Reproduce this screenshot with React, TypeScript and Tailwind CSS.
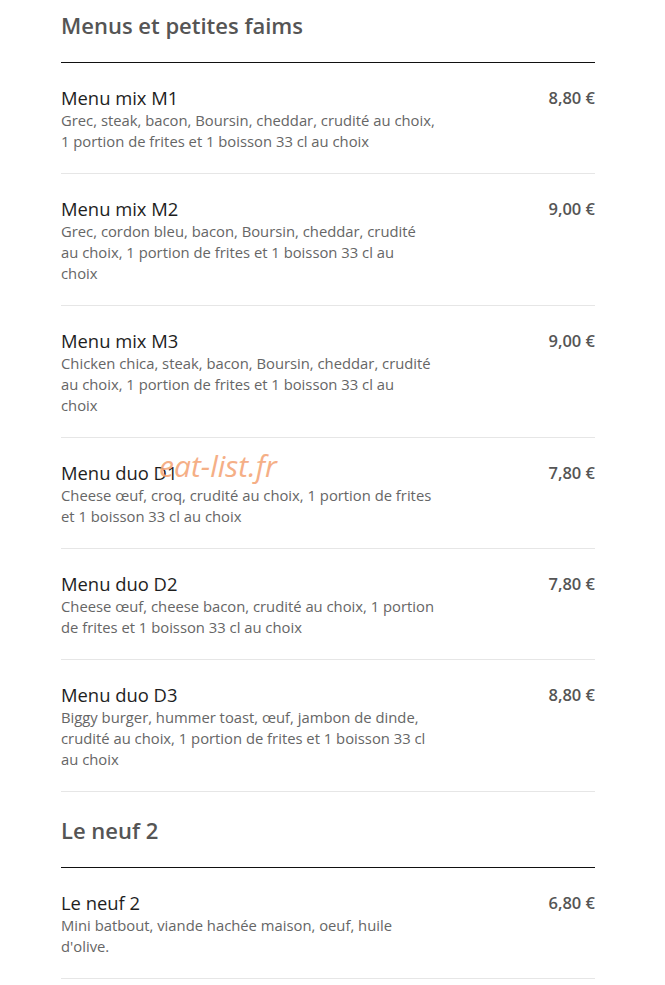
const sections = [
  {
    title: "Menus et petites faims",
    items: [
      {
        name: "Menu mix M1",
        desc: "Grec, steak, bacon, Boursin, cheddar, crudité au choix,\n1 portion de frites et 1 boisson 33 cl au choix",
        price: "8,80 €",
      },
      {
        name: "Menu mix M2",
        desc: "Grec, cordon bleu, bacon, Boursin, cheddar, crudité\nau choix, 1 portion de frites et 1 boisson 33 cl au\nchoix",
        price: "9,00 €",
      },
      {
        name: "Menu mix M3",
        desc: "Chicken chica, steak, bacon, Boursin, cheddar, crudité\nau choix, 1 portion de frites et 1 boisson 33 cl au\nchoix",
        price: "9,00 €",
      },
      {
        name: "Menu duo D1",
        desc: "Cheese œuf, croq, crudité au choix, 1 portion de frites\net 1 boisson 33 cl au choix",
        price: "7,80 €",
      },
      {
        name: "Menu duo D2",
        desc: "Cheese œuf, cheese bacon, crudité au choix, 1 portion\nde frites et 1 boisson 33 cl au choix",
        price: "7,80 €",
      },
      {
        name: "Menu duo D3",
        desc: "Biggy burger, hummer toast, œuf, jambon de dinde,\ncrudité au choix, 1 portion de frites et 1 boisson 33 cl\nau choix",
        price: "8,80 €",
      },
    ],
  },
  {
    title: "Le neuf 2",
    items: [
      {
        name: "Le neuf 2",
        desc: "Mini batbout, viande hachée maison, oeuf, huile\nd'olive.",
        price: "6,80 €",
      },
    ],
  },
];

export default function App() {
  return (
    <div
      className="relative min-h-[985px] bg-white pl-[61px] pr-[70px] pt-[11px] pb-6"
      style={{ fontFamily: '"Open Sans", sans-serif' }}
    >
      {sections.map((section, i) => (
        <section key={i} className={i === 0 ? "" : "pt-[24px]"}>
          <h2 className="border-b border-[#111] pb-[23px] text-[22px] font-semibold leading-[28px] text-[#555]">
            {section.title}
          </h2>
          {section.items.map((item, j) => (
            <div
              key={j}
              className="flex justify-between border-b border-[#e6e6e6] pt-[23px] pb-[21px]"
            >
              <div className="w-[390px]">
                <h3 className="text-[18.4px] leading-6 text-[#1e1e1e]">{item.name}</h3>
                <p className="whitespace-pre-line text-[14.8px] leading-[21px] text-[#666]">{item.desc}</p>
              </div>
              <div className="text-[16.5px] font-semibold leading-6 text-[#555]">{item.price}</div>
            </div>
          ))}
        </section>
      ))}
      <div className="pointer-events-none absolute left-[159px] top-[446px] text-[30px] italic leading-10 text-[#f5a77a] opacity-90">
        eat-list.fr
      </div>
    </div>
  );
}
